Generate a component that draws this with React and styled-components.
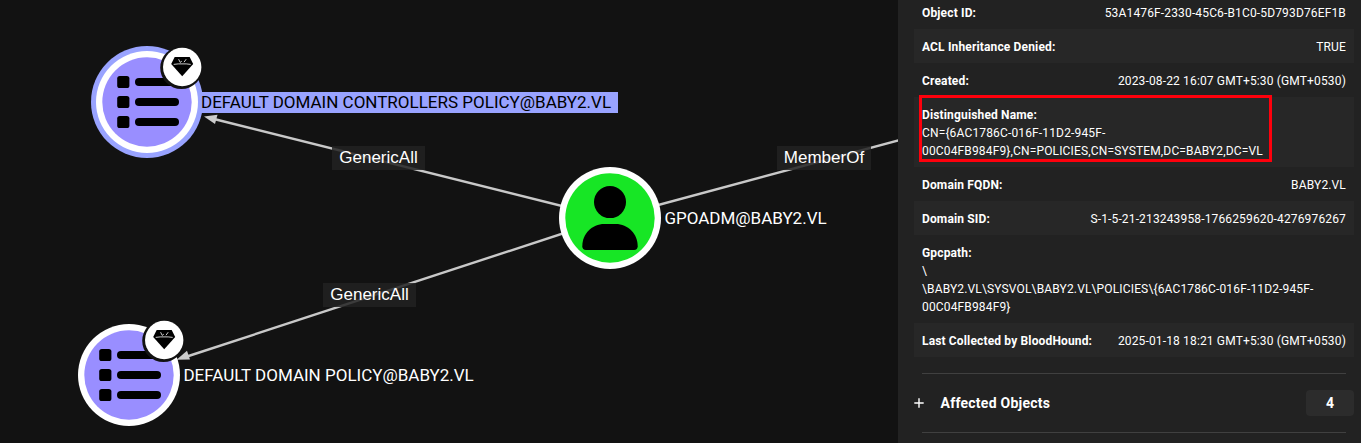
import React from "react";
import styled, { createGlobalStyle, css } from "styled-components";

const GlobalStyle = createGlobalStyle`
  * { box-sizing: border-box; }
  body {
    margin: 0;
    background: #121212;
    color: #fff;
    font-family: Roboto, "Liberation Sans", sans-serif;
    overflow: hidden;
  }
`;

const Page = styled.div`
  display: flex;
  width: 1361px;
  height: 443px;
  background: #121212;
  overflow: hidden;
`;

const Graph = styled.main`
  position: relative;
  flex: 0 0 898px;
  overflow: hidden;
`;

const Edges = styled.svg`
  position: absolute;
  inset: 0;
  display: block;
`;

const EdgeLabel = styled.div`
  position: absolute;
  left: ${(p) => p.$x}px;
  top: ${(p) => p.$y}px;
  width: ${(p) => p.$w}px;
  height: 24px;
  line-height: 23px;
  text-align: center;
  font-family: "Liberation Sans", Arial, sans-serif;
  font-size: 17px;
  background: rgba(34, 34, 34, 0.85);
`;

const NodeLabel = styled.div`
  position: absolute;
  left: ${(p) => p.$x}px;
  top: ${(p) => p.$y}px;
  height: 21px;
  line-height: 21px;
  font-size: 17px;
  white-space: nowrap;
  ${(p) =>
    p.$selected &&
    css`
      padding: 0 7px 0 1px;
      color: #000;
      background: #99a3ff;
    `}
`;

const Panel = styled.aside`
  flex: 1;
  display: flex;
  flex-direction: column;
  padding: 0 7px 0 16px;
  background: #222;
`;

const Fields = styled.div`
  position: relative;
  margin-top: -5px;
`;

const Row = styled.div`
  display: flex;
  flex-direction: ${(p) => (p.$stacked ? "column" : "row")};
  justify-content: space-between;
  padding: 9px 8px 7px;
  font-size: 12px;
  line-height: 18px;
  letter-spacing: 0.15px;
  white-space: pre;
  &:nth-child(even) {
    background: #272727;
  }
`;

const Name = styled.span`
  font-weight: 700;
`;

const Value = styled.span``;

const Highlight = styled.div`
  position: absolute;
  left: 5px;
  top: 100px;
  width: 353px;
  height: 67px;
  border: 3px solid #ff000c;
`;

const Divider = styled.hr`
  flex: none;
  width: 424px;
  height: 1px;
  margin: 16px 8px;
  border: 0;
  background: #404040;
`;

const Section = styled.div`
  flex: none;
  display: flex;
  align-items: center;
  height: 26px;
`;

const Plus = styled.svg`
  width: 10px;
  height: 10px;
  margin-right: 16.5px;
`;

const Title = styled.span`
  flex: 1;
  font-size: 14px;
  font-weight: 700;
  letter-spacing: 0.25px;
`;

const Count = styled.span`
  width: 48px;
  height: 26px;
  border-radius: 4px;
  background: #2c2c2c;
  font-size: 14px;
  font-weight: 700;
  line-height: 26px;
  text-align: center;
`;

const fields = [
  { name: "Object ID:", value: "53A1476F-2330-45C6-B1C0-5D793D76EF1B" },
  { name: "ACL Inheritance Denied:", value: "TRUE" },
  { name: "Created:", value: "2023-08-22 16:07 GMT+5:30 (GMT+0530)" },
  {
    name: "Distinguished Name:",
    value: "CN={6AC1786C-016F-11D2-945F-\n00C04FB984F9},CN=POLICIES,CN=SYSTEM,DC=BABY2,DC=VL",
    stacked: true,
  },
  { name: "Domain FQDN:", value: "BABY2.VL" },
  { name: "Domain SID:", value: "S-1-5-21-213243958-1766259620-4276976267" },
  {
    name: "Gpcpath:",
    value: "\\\n\\BABY2.VL\\SYSVOL\\BABY2.VL\\POLICIES\\{6AC1786C-016F-11D2-945F-\n00C04FB984F9}",
    stacked: true,
  },
  { name: "Last Collected by BloodHound:", value: "2025-01-18 18:21 GMT+5:30 (GMT+0530)" },
];

function PolicyNode({ x, y, selected }) {
  return (
    <g transform={`translate(${x} ${y})`}>
      {selected && <circle r="56" fill="#99a3ff" />}
      <circle r="51" fill="#fff" />
      <circle r="44.7" fill="#998eff" />
      {[-20, 0, 20].map((dy) => (
        <g key={dy}>
          <rect x="-29.8" y={dy - 6} width="12.2" height="12" rx="2.6" />
          <rect x="-12" y={dy - 4} width="44" height="8" rx="4" />
        </g>
      ))}
      <g transform="translate(35.2 -35)">
        <circle cx="-0.8" cy="0.8" r="21.2" fill="#121212" />
        <circle r="19.2" fill="#fff" />
        <path d="M-7.5-10H7.5L11-3L0 9.2L-11-3Z" />
        <path
          d="M-8.5-2.6L-4-3.1H4L8.5-2.6M-3.6-7.8L-2-4.6L-.4-5.8M4-7.8L1.8-4.8"
          fill="none"
          stroke="#fff"
          strokeWidth="0.8"
        />
      </g>
    </g>
  );
}

function UserNode({ x, y }) {
  return (
    <g transform={`translate(${x} ${y})`}>
      <circle r="51" fill="#fff" />
      <circle r="44.7" fill="#17e625" />
      <circle cy="-15.9" r="16" />
      <path d="M-5.7 6H5.7C18 6 27.7 15.7 27.7 28.3Q27.7 32 24 32H-24Q-27.7 32-27.7 28.3C-27.7 15.7-18 6-5.7 6Z" />
    </g>
  );
}

export default function App() {
  return (
    <Page>
      <GlobalStyle />
      <Graph>
        <Edges width="898" height="443" viewBox="0 0 898 443">
          <g stroke="#c8c8c8" strokeWidth="2.4">
            <path d="M214 119L610 218" />
            <path d="M187 356.5L610 218" />
            <path d="M610 218L900 140" />
          </g>
          <g fill="#cccccc">
            <path d="M204 116.5L217.5 114.8L215 124Z" />
            <path d="M176.5 359.8L187 350.8L190 359.5Z" />
          </g>
          <PolicyNode x={147} y={102} selected />
          <PolicyNode x={129} y={375} />
          <UserNode x={610} y={218} />
        </Edges>
        <EdgeLabel $x={332} $y={146} $w={93}>GenericAll</EdgeLabel>
        <EdgeLabel $x={323} $y={283} $w={93}>GenericAll</EdgeLabel>
        <EdgeLabel $x={777} $y={146} $w={94}>MemberOf</EdgeLabel>
        <NodeLabel $x={200} $y={92} $selected>
          DEFAULT DOMAIN CONTROLLERS POLICY@BABY2.VL
        </NodeLabel>
        <NodeLabel $x={183.4} $y={365}>DEFAULT DOMAIN POLICY@BABY2.VL</NodeLabel>
        <NodeLabel $x={664.4} $y={208}>GPOADM@BABY2.VL</NodeLabel>
      </Graph>
      <Panel>
        <Fields>
          {fields.map((f) => (
            <Row key={f.name} $stacked={f.stacked}>
              <Name>{f.name}</Name>
              <Value>{f.value}</Value>
            </Row>
          ))}
          <Highlight />
        </Fields>
        <Divider />
        <Section>
          <Plus viewBox="0 0 10 10" fill="none" stroke="#fff" strokeWidth="1.4">
            <path d="M5 .3V9.7M.3 5H9.7" />
          </Plus>
          <Title>Affected Objects</Title>
          <Count>4</Count>
        </Section>
        <Divider />
      </Panel>
    </Page>
  );
}
